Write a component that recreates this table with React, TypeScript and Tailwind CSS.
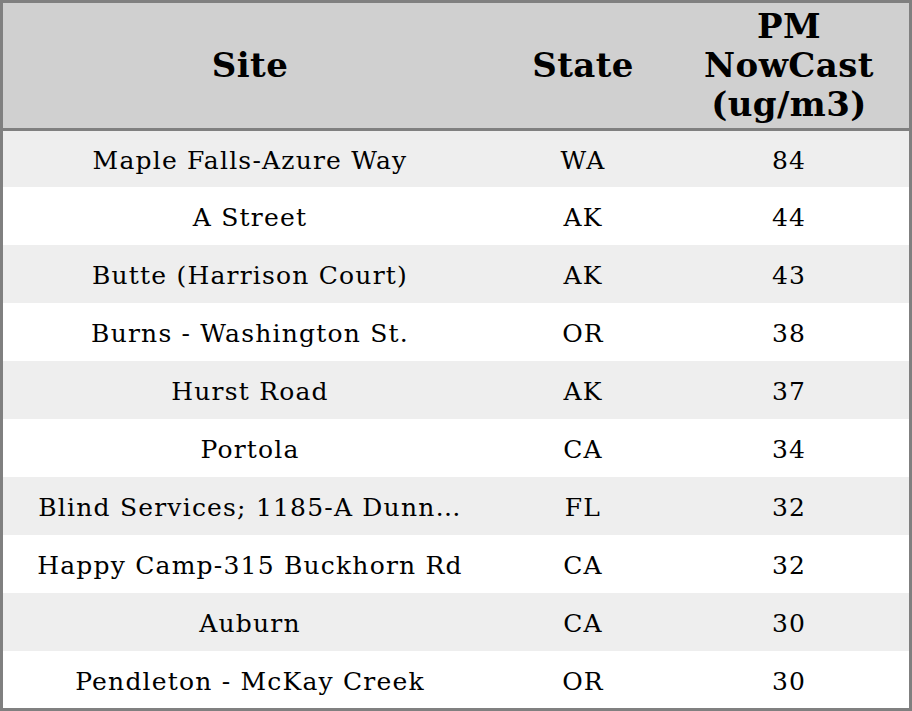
import React from "react";

const rows = [
    { site: "Maple Falls-Azure Way", state: "WA", pm: "84" },
    { site: "A Street", state: "AK", pm: "44" },
    { site: "Butte (Harrison Court)", state: "AK", pm: "43" },
    { site: "Burns - Washington St.", state: "OR", pm: "38" },
    { site: "Hurst Road", state: "AK", pm: "37" },
    { site: "Portola", state: "CA", pm: "34" },
    { site: "Blind Services; 1185-A Dunn…", state: "FL", pm: "32" },
    { site: "Happy Camp-315 Buckhorn Rd", state: "CA", pm: "32" },
    { site: "Auburn", state: "CA", pm: "30" },
    { site: "Pendleton - McKay Creek", state: "OR", pm: "30" },
];

export default function App() {
    return (
        <div
            className="w-[912px] h-[711px] border-[3px] border-[#808080] bg-white text-black flex flex-col"
            style={{ fontFamily: '"DejaVu Serif", serif' }}
        >
            {/* Header */}
            <div className="h-[128px] bg-[#d0d0d0] border-b-[3px] border-[#808080] flex items-center font-bold text-[34px] leading-[39px] tracking-[0.4px] text-center">
                <div className="w-[494px]">Site</div>
                <div className="w-[172px]">State</div>
                <div className="flex-1">
                    PM
                    <br />
                    NowCast
                    <br />
                    (ug/m3)
                </div>
            </div>

            {/* Rows */}
            <div className="flex flex-col flex-1 text-[25px] tracking-[1.2px]">
                {rows.map((r, i) => (
                    <div
                        key={i}
                        className={
                            "flex items-center text-center pt-[4px] " +
                            (i % 2 === 0 ? "bg-[#eeeeee] " : "bg-white ") +
                            (i === 0 ? "h-[56px]" : i === 9 ? "h-[57px]" : "h-[58px]")
                        }
                    >
                        <div className="w-[494px] whitespace-nowrap">{r.site}</div>
                        <div className="w-[172px]">{r.state}</div>
                        <div className="flex-1">{r.pm}</div>
                    </div>
                ))}
            </div>
        </div>
    );
}
